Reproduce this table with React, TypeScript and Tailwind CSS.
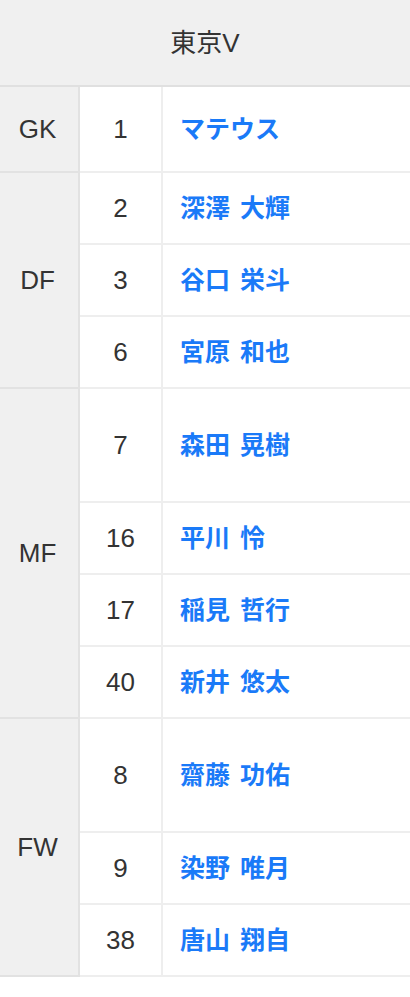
import React from "react";

type Player = { no: string; name: string; h: string };
type Group = { pos: string; players: Player[] };

const groups: Group[] = [
  { pos: "GK", players: [{ no: "1", name: "マテウス", h: "h-[84px]" }] },
  {
    pos: "DF",
    players: [
      { no: "2", name: "深澤 大輝", h: "h-[70px]" },
      { no: "3", name: "谷口 栄斗", h: "h-[70px]" },
      { no: "6", name: "宮原 和也", h: "h-[70px]" },
    ],
  },
  {
    pos: "MF",
    players: [
      { no: "7", name: "森田 晃樹", h: "h-[112px]" },
      { no: "16", name: "平川 怜", h: "h-[70px]" },
      { no: "17", name: "稲見 哲行", h: "h-[70px]" },
      { no: "40", name: "新井 悠太", h: "h-[70px]" },
    ],
  },
  {
    pos: "FW",
    players: [
      { no: "8", name: "齋藤 功佑", h: "h-[112px]" },
      { no: "9", name: "染野 唯月", h: "h-[70px]" },
      { no: "38", name: "唐山 翔自", h: "h-[70px]" },
    ],
  },
];

export default function App() {
  return (
    <div
      className="w-[410px] bg-white text-[#333] text-[26px]"
      style={{ fontFamily: '"Liberation Sans", "Noto Sans CJK JP", sans-serif' }}
    >
      <div className="h-[87px] bg-[#f0f0f0] border-b-2 border-[#e0e0e0] flex items-center justify-center">
        <span className="leading-none">東京V</span>
      </div>
      {groups.map((g) => (
        <div key={g.pos} className="flex">
          <div className="w-[80px] shrink-0 bg-[#f0f0f0] border-r-2 border-b-2 border-[#e2e2e2] flex items-center justify-center pr-[3px]">
            <span className="leading-none">{g.pos}</span>
          </div>
          <div className="flex-1 flex flex-col">
            {g.players.map((p) => (
              <div key={p.no} className="flex border-b-2 border-[#eeeeee]">
                <div className={`w-[83px] shrink-0 border-r-2 border-[#eeeeee] flex items-center justify-center ${p.h}`}>
                  <span className="leading-none">{p.no}</span>
                </div>
                <div className="flex-1 flex items-center pl-[17px]">
                  <span className="leading-none text-[25px] font-bold text-[#1a7af8] [word-spacing:3px]">{p.name}</span>
                </div>
              </div>
            ))}
          </div>
        </div>
      ))}
    </div>
  );
}
